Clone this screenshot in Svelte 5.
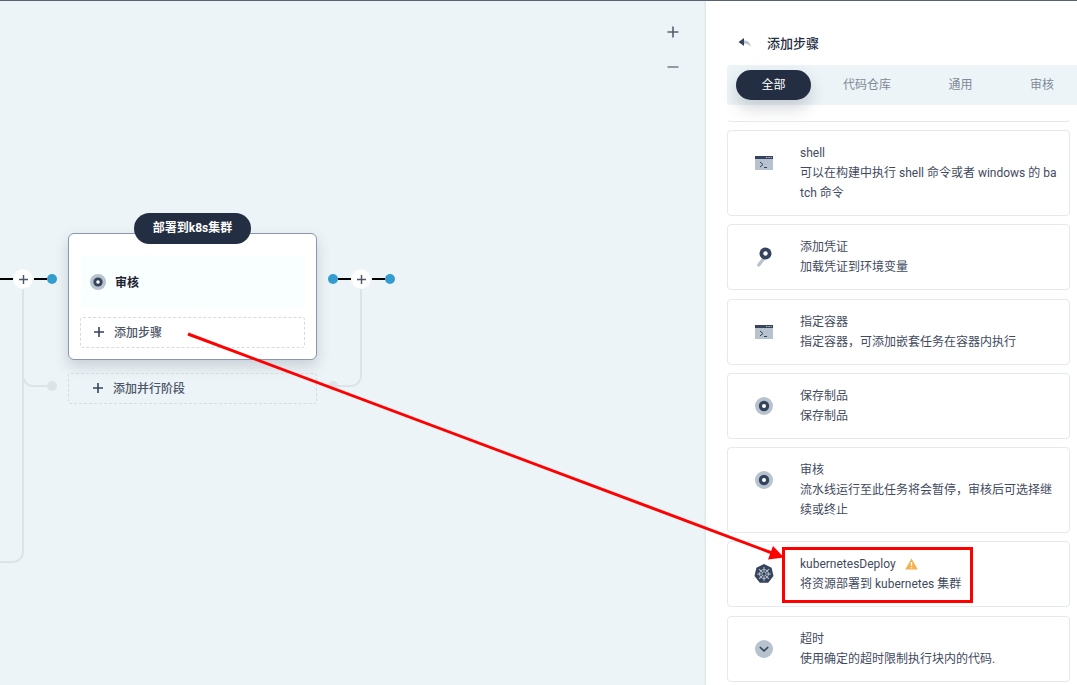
<script lang="ts">
	interface Step {
		title: string;
		desc: string;
		icon: string;
		warn?: boolean;
	}

	const tabs = ['全部', '代码仓库', '通用', '审核'];

	const steps: Step[] = [
		{ title: 'shell', desc: '可以在构建中执行 shell 命令或者 windows 的 batch 命令', icon: 'terminal' },
		{ title: '添加凭证', desc: '加载凭证到环境变量', icon: 'key' },
		{ title: '指定容器', desc: '指定容器，可添加嵌套任务在容器内执行', icon: 'terminal' },
		{ title: '保存制品', desc: '保存制品', icon: 'dot' },
		{ title: '审核', desc: '流水线运行至此任务将会暂停，审核后可选择继续或终止', icon: 'dot' },
		{ title: 'kubernetesDeploy', desc: '将资源部署到 kubernetes 集群', icon: 'k8s', warn: true },
		{ title: '超时', desc: '使用确定的超时限制执行块内的代码.', icon: 'chevron' }
	];

	const spokes = [0, 45, 90, 135, 180, 225, 270, 315];
</script>

{#snippet plus(size, color)}
	<svg class="plus" width={size} height={size} viewBox="0 0 12 12">
		<path d="M6 0v12M0 6h12" stroke={color} stroke-width="1.9" fill="none" />
	</svg>
{/snippet}

{#snippet dotIcon(size)}
	<svg width={size} height={size} viewBox="0 0 18 18">
		<circle cx="9" cy="9" r="9" fill="#b6c2cd" />
		<circle cx="9" cy="9" r="5.2" fill="#36435c" />
		<circle cx="9" cy="9" r="2" fill="#fff" />
	</svg>
{/snippet}

<div class="page">
	<div class="topline"></div>
	<main class="canvas">
		<div class="zoom zoom-in">
			<svg width="12" height="12" viewBox="0 0 12 12"><path d="M6 .5v11M.5 6h11" stroke="#55606f" stroke-width="1.6" /></svg>
		</div>
		<div class="zoom zoom-out">
			<svg width="12" height="12" viewBox="0 0 12 12"><path d="M.5 6h11" stroke="#7a8591" stroke-width="1.6" /></svg>
		</div>

		<svg class="wires" width="706" height="685">
			<g fill="none" stroke="#dde3e8" stroke-width="2">
				<path d="M23 289V552a10 10 0 0 1-10 10H0" />
				<path d="M23 376a10 10 0 0 0 10 10H52" />
				<path d="M333 386H351a10 10 0 0 0 10-10V289" />
			</g>
			<circle cx="52" cy="386" r="5" fill="#dde3e8" />
			<circle cx="333" cy="386" r="5" fill="#dde3e8" />
			<g stroke="#000" stroke-width="2">
				<path d="M0 279H13M34 279H47" />
				<path d="M338 279H351M372 279H385" />
			</g>
			<circle cx="52" cy="279" r="5" fill="#329dce" />
			<circle cx="333" cy="279" r="5" fill="#329dce" />
			<circle cx="390" cy="279" r="5" fill="#329dce" />
		</svg>

		<div class="joint" style="left: 13px">{@render plus(9, '#4c5669')}</div>
		<div class="joint" style="left: 351px">{@render plus(9, '#4c5669')}</div>

		<section class="stage">
			<div class="stage-name">部署到k8s集群</div>
			<div class="task">
				{@render dotIcon(16)}
				<span>审核</span>
			</div>
			<div class="add-step">
				{@render plus(10, '#36435c')}
				<span>添加步骤</span>
			</div>
		</section>

		<div class="add-parallel">
			{@render plus(10, '#36435c')}
			<span>添加并行阶段</span>
		</div>
	</main>

	<aside class="panel">
		<header class="panel-head">
			<svg width="14" height="12" viewBox="0 0 14 12">
				<path d="M6 1 .5 5 6 9V6.500L6 3.500Z" fill="#36435c" />
				<path d="M6 3.500C9.500 3.500 12 5.500 13 10 11 7.500 9 6.500 6 6.500Z" fill="#b6c2cd" />
			</svg>
			<h2>添加步骤</h2>
		</header>

		<nav class="tabs">
			{#each tabs as tab, i}
				<div class="tab" class:active={i === 0}>{tab}</div>
			{/each}
		</nav>

		<div class="list">
			<div class="prev-edge"></div>
			{#each steps as step}
				<article class="step">
					<div class="step-icon">
						{#if step.icon === 'terminal'}
							<svg width="18" height="14" viewBox="0 0 18 14">
								<rect y="0" width="18" height="14" fill="#b6c2cd" />
								<rect y="0" width="18" height="3" fill="#36435c" />
								<path d="M11 1.500h6" stroke="#b6c2cd" stroke-width="1" stroke-dasharray="1 .6" />
								<path d="M5 6l3 2.500-3 2.500" fill="none" stroke="#36435c" stroke-width="1" />
								<path d="M9 11.500h3" stroke="#36435c" stroke-width="1" />
							</svg>
						{:else if step.icon === 'key'}
							<svg width="18" height="22" viewBox="0 0 18 22">
								<path d="M8 11 2 18.500 3 21 5 20 10.500 13Z" fill="#b6c2cd" />
								<circle cx="10.500" cy="7.500" r="6" fill="#36435c" />
								<circle cx="10.500" cy="7.500" r="2.200" fill="#fff" />
							</svg>
						{:else if step.icon === 'dot'}
							{@render dotIcon(18)}
						{:else if step.icon === 'k8s'}
							<svg width="20" height="20" viewBox="0 0 20 20">
								<path d="M10 0 17.600 3.700 19.500 12 14.200 18.700H5.800L.5 12 2.400 3.700Z" fill="#36435c" />
								<g stroke="#b6c2cd" stroke-width="1" fill="none">
									<circle cx="10" cy="10" r="4.500" />
									{#each spokes as a}
										<path d="M10 10V3" transform="rotate({a} 10 10)" />
									{/each}
								</g>
								<circle cx="10" cy="10" r="1.500" fill="#36435c" />
							</svg>
						{:else}
							<svg width="18" height="18" viewBox="0 0 18 18">
								<circle cx="9" cy="9" r="9" fill="#b6c2cd" />
								<path d="M4.800 7 9 10.800 13.200 7" fill="none" stroke="#36435c" stroke-width="1.600" />
							</svg>
						{/if}
					</div>
					<div class="step-body">
						<div class="step-title">
							{step.title}
							{#if step.warn}
								<svg class="warn" width="13" height="12" viewBox="0 0 13 12">
									<path d="M6.500 .5 12.800 11.500H.2Z" fill="#f3b24c" />
									<path d="M6.500 4v4" stroke="#fff" stroke-width="1.300" />
									<path d="M6.500 9v1.300" stroke="#fff" stroke-width="1.300" />
								</svg>
							{/if}
						</div>
						<div class="step-desc">{step.desc}</div>
					</div>
				</article>
			{/each}
		</div>
	</aside>

	<svg class="annotation" width="1077" height="685">
		<path d="M188 334 772 553" stroke="#f00" stroke-width="3" fill="none" />
		<path d="M784 557.500 768 559.500 773 546Z" fill="#f00" />
		<rect x="783.500" y="548.500" width="188" height="53" fill="none" stroke="#f00" stroke-width="3" />
	</svg>
</div>

<style>
	:global(body) {
		margin: 0;
		overflow: hidden;
	}
	.page {
		position: relative;
		display: flex;
		width: 1077px;
		height: 685px;
		overflow: hidden;
		font-family: Roboto, "Noto Sans CJK SC", sans-serif;
		font-size: 12px;
		color: #36435c;
	}
	.topline {
		position: absolute;
		top: 0;
		left: 0;
		right: 0;
		height: 1px;
		background: #5a6272;
		z-index: 3;
	}
	.canvas {
		position: relative;
		width: 706px;
		flex: none;
		background: #edf4f7;
	}
	.zoom {
		position: absolute;
		left: 667px;
		line-height: 0;
	}
	.zoom-in {
		top: 26px;
	}
	.zoom-out {
		top: 61px;
	}
	.wires {
		position: absolute;
		top: 0;
		left: 0;
	}
	.joint {
		position: absolute;
		top: 269px;
		width: 18px;
		height: 18px;
		border: 1px dashed #f6f8fa;
		border-radius: 50%;
		background: #fff;
		display: flex;
		align-items: center;
		justify-content: center;
	}
	.stage {
		position: absolute;
		left: 68px;
		top: 233px;
		width: 249px;
		height: 127px;
		box-sizing: border-box;
		padding: 21px 11px 11px;
		display: flex;
		flex-direction: column;
		gap: 9px;
		background: #fff;
		border: 1px solid #8a97ad;
		border-radius: 6px;
		box-shadow: 0 6px 14px rgba(54, 67, 92, 0.2);
	}
	.stage-name {
		position: absolute;
		left: 65px;
		top: -21px;
		width: 117px;
		height: 31px;
		border-radius: 16px;
		background: #242e42;
		color: #fff;
		font-weight: 700;
		line-height: 30px;
		text-align: center;
	}
	.task {
		height: 53px;
		flex: none;
		margin-left: 1px;
		display: flex;
		align-items: center;
		gap: 9px;
		padding-left: 9px;
		box-sizing: border-box;
		background: #f9fffe;
		color: #1d2433;
		font-weight: 700;
	}
	.add-step,
	.add-parallel {
		box-sizing: border-box;
		display: flex;
		align-items: center;
		gap: 10px;
		border: 1px dashed #d5dbe2;
		border-radius: 3px;
		font-weight: 500;
		color: #4c5669;
	}
	.add-step {
		height: 31px;
		padding: 0 0 2px 13px;
	}
	.add-parallel {
		position: absolute;
		left: 68px;
		top: 373px;
		width: 249px;
		height: 31px;
		padding: 0 0 2px 24px;
	}
	.plus {
		flex: none;
	}
	.panel {
		width: 371px;
		flex: none;
		box-sizing: border-box;
		padding-left: 21px;
		background: #fff;
		box-shadow: -1px 0 2px rgba(54, 67, 92, 0.1);
		position: relative;
	}
	.panel-head {
		height: 65px;
		padding: 20px 0 0 11px;
		box-sizing: border-box;
		display: flex;
		align-items: center;
		gap: 15px;
	}
	.panel-head h2 {
		margin: 0;
		font-size: 13px;
		font-weight: 500;
		color: #242e42;
	}
	.tabs {
		height: 40px;
		display: flex;
		align-items: center;
		gap: 6.5px;
		padding-left: 9px;
		background: #edf4f7;
		border-radius: 3px 0 0 3px;
	}
	.tab {
		flex: none;
		height: 30px;
		line-height: 30px;
		padding: 0 25.5px;
		color: #7f8a98;
	}
	.tab.active {
		background: #242e42;
		color: #fff;
		border-radius: 15px;
		box-shadow: 0 8px 16px rgba(36, 46, 66, 0.2);
	}
	.list {
		display: flex;
		flex-direction: column;
		gap: 8.25px;
		width: 343px;
	}
	.prev-edge {
		height: 16.75px;
		box-sizing: border-box;
		border-bottom: 1px solid #e3e9ef;
		border-radius: 0 0 4px 4px;
	}
	.step {
		box-sizing: border-box;
		display: flex;
		border: 1px solid #e3e9ef;
		border-radius: 4px;
		padding: 12px 12px 12px 0;
		background: #fff;
	}
	.step-icon {
		width: 72px;
		flex: none;
		height: 20px;
		margin-top: 10px;
		display: flex;
		justify-content: center;
		align-items: center;
	}
	.step-body {
		flex: 1;
		min-width: 0;
		line-height: 20px;
		word-break: break-all;
		color: #3f4a5e;
	}
	.step-title {
		display: flex;
		align-items: center;
		gap: 9px;
	}
	.annotation {
		position: absolute;
		top: 0;
		left: 0;
		pointer-events: none;
		z-index: 2;
	}
</style>
